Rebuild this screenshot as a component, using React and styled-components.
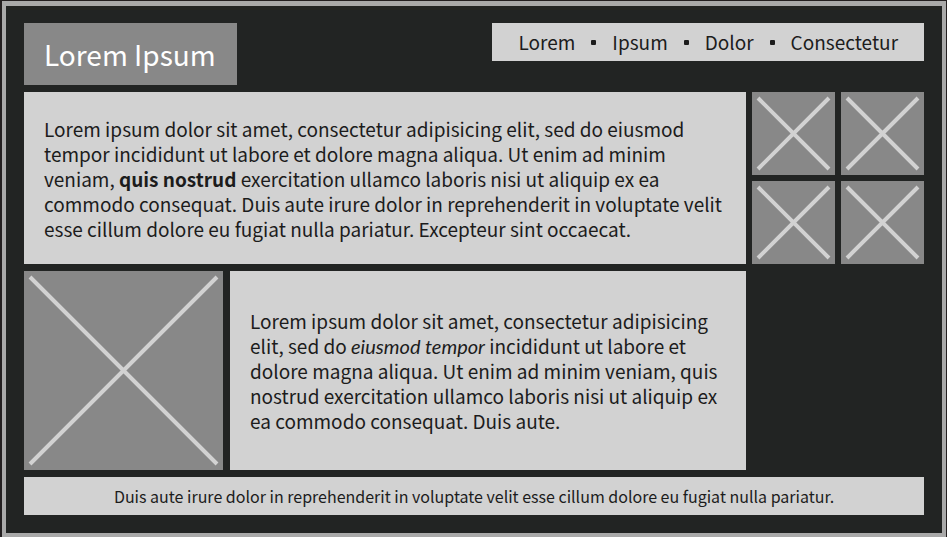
import React from "react";
import styled, { createGlobalStyle } from "styled-components";

const GlobalStyle = createGlobalStyle`
  *, *::before, *::after { box-sizing: border-box; }
  body {
    margin: 0;
    background: #222423;
    color: #1c1c1c;
    font-family: "Noto Sans CJK SC", "Open Sans", sans-serif;
  }
`;

const Frame = styled.div`
  min-height: 100vh;
  padding: 1px 1px 0 2px;
  background: #231f20;
`;

const Page = styled.div`
  display: flex;
  flex-direction: column;
  gap: 7px;
  min-height: calc(100vh - 1px);
  padding: 17px 18px;
  border: 4px solid #a9a9a9;
  border-top-width: 5px;
  background: #222423;
`;

const Header = styled.header`
  display: flex;
  justify-content: space-between;
  align-items: flex-start;
`;

const Title = styled.h1`
  margin: 0;
  padding: 9px 21px 9px 20px;
  background: #888888;
  color: #ffffff;
  font-size: 28px;
  line-height: 44px;
  font-weight: 400;
`;

const Nav = styled.nav`
  display: flex;
  align-items: center;
  gap: 16px;
  padding: 7px 26px;
  background: #d2d2d2;
`;

const NavLink = styled.a`
  color: inherit;
  font-size: 19px;
  line-height: 24px;
  text-decoration: none;
`;

const Dot = styled.span`
  width: 5px;
  height: 5px;
  border-radius: 1px;
  background: #1c1c1c;
`;

const Main = styled.main`
  display: grid;
  grid-template-columns: minmax(0, 1fr) 172px;
  gap: 7px 6px;
`;

const Panel = styled.section`
  display: flex;
  align-items: center;
  flex: 1;
  min-width: 0;
  padding: 20px;
  background: #d2d2d2;
`;

const Copy = styled.p`
  margin: 0;
  font-size: 19px;
  line-height: 25px;
`;

const Strong = styled.strong`
  font-weight: 700;
`;

const Emphasis = styled.em`
  font-family: Lato, sans-serif;
  font-size: 20px;
  line-height: 20px;
  font-style: italic;
`;

const Gallery = styled.aside`
  display: grid;
  grid-template-columns: 1fr 1fr;
  gap: 6px;
`;

const Feature = styled.div`
  display: flex;
  gap: 7px;
`;

const Picture = styled.svg`
  display: block;
  flex: none;
  width: ${(p) => (p.$large ? "199px" : "100%")};
  aspect-ratio: 1;
  background: #888888;
  stroke: #d2d2d2;
  stroke-width: 4;
`;

const Footer = styled.footer`
  padding: 7px 20px;
  background: #d2d2d2;
  font-size: 16px;
  line-height: 24px;
  text-align: center;
`;

const links = ["Lorem", "Ipsum", "Dolor", "Consectetur"];

function Placeholder({ large = false }) {
  const size = large ? 199 : 83;
  const end = size - 6;
  return (
    <Picture $large={large} viewBox={`0 0 ${size} ${size}`} role="img" aria-label="Image placeholder">
      <path d={`M6 6L${end} ${end}M${end} 6L6 ${end}`} />
    </Picture>
  );
}

export default function App() {
  return (
    <Frame>
      <GlobalStyle />
      <Page>
        <Header>
          <Title>Lorem Ipsum</Title>
          <Nav>
            {links.map((label, i) => (
              <React.Fragment key={label}>
                {i > 0 && <Dot aria-hidden="true" />}
                <NavLink href="#">{label}</NavLink>
              </React.Fragment>
            ))}
          </Nav>
        </Header>
        <Main>
          <Panel>
            <Copy>
              Lorem ipsum dolor sit amet, consectetur adipisicing elit, sed do eiusmod
              tempor incididunt ut labore et dolore magna aliqua. Ut enim ad minim
              veniam, <Strong>quis nostrud</Strong> exercitation ullamco laboris nisi ut
              aliquip ex ea<br />commodo consequat. Duis aute irure dolor in reprehenderit in
              voluptate velit esse cillum dolore eu fugiat nulla pariatur. Excepteur sint
              occaecat.
            </Copy>
          </Panel>
          <Gallery>
            <Placeholder />
            <Placeholder />
            <Placeholder />
            <Placeholder />
          </Gallery>
          <Feature>
            <Placeholder large />
            <Panel>
              <Copy>
                Lorem ipsum dolor sit amet, consectetur adipisicing elit, sed do{" "}
                <Emphasis>eiusmod tempor</Emphasis> incididunt ut labore et<br />dolore
                magna aliqua. Ut enim ad minim veniam, quis nostrud exercitation ullamco
                laboris nisi ut aliquip ex ea commodo consequat. Duis aute.
              </Copy>
            </Panel>
          </Feature>
        </Main>
        <Footer>
          Duis aute irure dolor in reprehenderit in voluptate velit esse cillum dolore eu
          fugiat nulla pariatur.
        </Footer>
      </Page>
    </Frame>
  );
}
